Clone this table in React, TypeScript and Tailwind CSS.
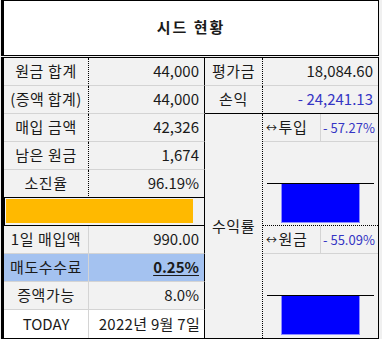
import React from "react";

const font = { fontFamily: '"Noto Sans CJK KR", "Noto Sans", sans-serif' };

// one small bar chart drawn in a merged sheet cell
const BarChart = () => (
  <svg width="115" height="83" viewBox="0 0 115 83" className="block">
    <rect x="18.5" y="41.5" width="78" height="39" fill="#0000ff" stroke="#8c8cff" />
    <line x1="4" y1="41.5" x2="111" y2="41.5" stroke="#000" strokeWidth="1.2" />
  </svg>
);

export default function App() {
  return (
    <div className="w-[382px] h-[339px] bg-[#f0f0f0] overflow-hidden text-[15px] text-[#1a1a1a]" style={font}>
      {/* title */}
      <div className="ml-px w-[378px] h-[56px] bg-white border-y border-r border-black border-l-[3px] border-l-black border-l-double flex items-center justify-center">
        <span className="font-bold text-[15px] tracking-[2px] -mt-[2px]">시드 현황</span>
      </div>

      {/* table */}
      <div className="ml-px mt-px w-[378px] border-y border-r border-black border-l-[3px] border-l-double grid grid-cols-[85px_116px_58px_58px_57px] grid-rows-[repeat(10,28px)] bg-[#f2f2f2]">
        {/* row 1 */}
        <div className="col-start-1 row-start-1 flex items-center justify-center tracking-[0.6px] border-b border-[#d4d4d4] border-r border-r-black [border-right-style:dotted]">원금 합계</div>
        <div className="col-start-2 row-start-1 flex items-center justify-end pr-[5px] border-b border-[#d4d4d4] border-r border-r-black">44,000</div>
        <div className="col-start-3 row-start-1 flex items-center justify-center tracking-[0.6px] border-b border-[#d4d4d4] border-r border-r-black [border-right-style:dotted]">평가금</div>
        <div className="col-start-4 col-span-2 row-start-1 flex items-center justify-end pr-[5px] border-b border-[#d4d4d4]">18,084.60</div>

        {/* row 2 */}
        <div className="col-start-1 row-start-2 flex items-center justify-center tracking-[0.4px] border-b border-[#d4d4d4] border-r border-r-black [border-right-style:dotted]">(증액 합계)</div>
        <div className="col-start-2 row-start-2 flex items-center justify-end pr-[5px] border-b border-[#d4d4d4] border-r border-r-black">44,000</div>
        <div className="col-start-3 row-start-2 flex items-center justify-center tracking-[0.6px] border-b border-b-black border-r border-r-black [border-right-style:dotted]">손익</div>
        <div className="col-start-4 col-span-2 row-start-2 flex items-center justify-end pr-[5px] border-b border-b-black text-[#3535c4]">- 24,241.13</div>

        {/* rows 3-5 left */}
        <div className="col-start-1 row-start-3 flex items-center justify-center tracking-[0.6px] border-b border-[#d4d4d4] border-r border-r-black [border-right-style:dotted]">매입 금액</div>
        <div className="col-start-2 row-start-3 flex items-center justify-end pr-[5px] border-b border-[#d4d4d4] border-r border-r-black">42,326</div>
        <div className="col-start-1 row-start-4 flex items-center justify-center tracking-[0.6px] border-b border-[#d4d4d4] border-r border-r-black [border-right-style:dotted]">남은 원금</div>
        <div className="col-start-2 row-start-4 flex items-center justify-end pr-[5px] border-b border-[#d4d4d4] border-r border-r-black">1,674</div>
        <div className="col-start-1 row-start-5 flex items-center justify-center tracking-[0.6px] border-b border-b-black border-r border-r-black [border-right-style:dotted]">소진율</div>
        <div className="col-start-2 row-start-5 flex items-center justify-end pr-[5px] border-b border-b-black border-r border-r-black">96.19%</div>

        {/* row 6: progress bar */}
        <div className="col-start-1 col-span-2 row-start-6 border-l border-l-black border-b border-b-black border-r border-r-black pl-px pr-[11px] pt-[1px] pb-[2px]">
          <div className="h-full bg-[#ffb900]" />
        </div>

        {/* rows 7-10 left */}
        <div className="col-start-1 row-start-7 flex items-center justify-center tracking-[0.6px] border-b border-[#d4d4d4] border-r border-r-[#d4d4d4]">1일 매입액</div>
        <div className="col-start-2 row-start-7 flex items-center justify-end pr-[5px] border-b border-[#d4d4d4] border-r border-r-black">990.00</div>
        <div className="col-start-1 row-start-8 flex items-center justify-center tracking-[0.6px] bg-[#a4c2f0] border-b border-[#d4d4d4] border-r border-r-[#d4d4d4]">매도수수료</div>
        <div className="col-start-2 row-start-8 flex items-center justify-end pr-[5px] bg-[#a4c2f0] border-b border-[#d4d4d4] border-r border-r-black">
          <span className="font-bold underline underline-offset-2">0.25%</span>
        </div>
        <div className="col-start-1 row-start-9 flex items-center justify-center tracking-[0.6px] border-b border-[#d4d4d4] border-r border-r-[#d4d4d4]">증액가능</div>
        <div className="col-start-2 row-start-9 flex items-center justify-end pr-[5px] border-b border-[#d4d4d4] border-r border-r-black">8.0%</div>
        <div className="col-start-1 row-start-10 flex items-center justify-center bg-white border-r border-r-[#d4d4d4]">TODAY</div>
        <div className="col-start-2 row-start-10 flex items-center justify-end pr-[4px] bg-white border-r border-r-black tracking-[0.3px]">2022년 9월 7일</div>

        {/* 수익률 merged */}
        <div className="col-start-3 row-start-3 row-span-8 flex items-center justify-center tracking-[0.6px] border-r border-r-black [border-right-style:dotted]">수익률</div>

        {/* 투입 */}
        <div className="col-start-4 row-start-3 flex items-center pl-[3px] tracking-[0.6px] border-b border-[#d4d4d4] border-r border-r-[#d4d4d4]">
          <span className="text-[11px] mr-[1px]">↔</span>투입
        </div>
        <div className="col-start-5 row-start-3 flex items-center pl-[2px] border-b border-[#d4d4d4] text-[13px] text-[#3535c4] whitespace-nowrap overflow-hidden">- 57.27%</div>
        <div className="col-start-4 col-span-2 row-start-4 row-span-3 border-b border-b-black [border-bottom-style:dotted] overflow-hidden">
          <BarChart />
        </div>

        {/* 원금 */}
        <div className="col-start-4 row-start-7 flex items-center pl-[3px] tracking-[0.6px] border-b border-[#d4d4d4] border-r border-r-[#d4d4d4]">
          <span className="text-[11px] mr-[1px]">↔</span>원금
        </div>
        <div className="col-start-5 row-start-7 flex items-center pl-[2px] border-b border-[#d4d4d4] text-[13px] text-[#3535c4] whitespace-nowrap overflow-hidden">- 55.09%</div>
        <div className="col-start-4 col-span-2 row-start-8 row-span-3 overflow-hidden">
          <BarChart />
        </div>
      </div>
    </div>
  );
}
